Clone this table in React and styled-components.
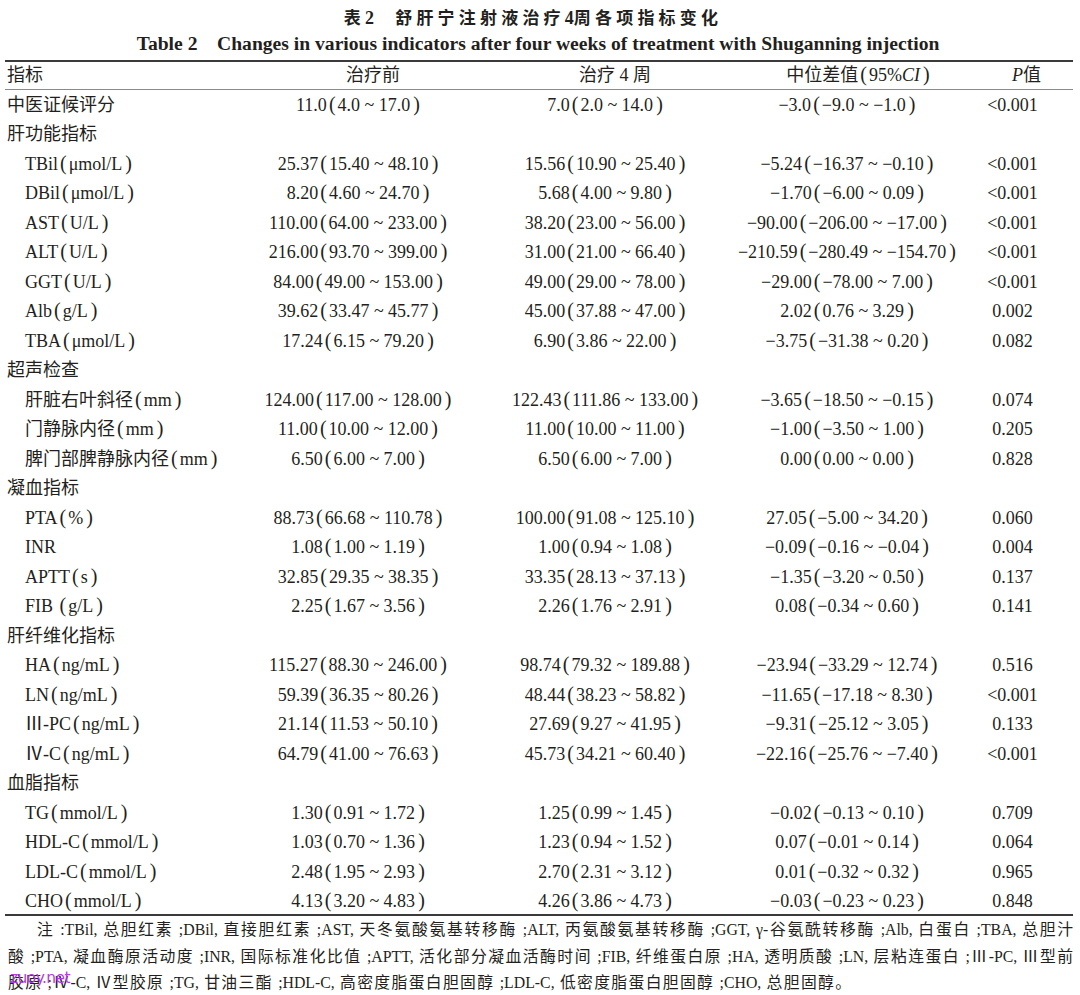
import React from "react";
import styled, { createGlobalStyle } from "styled-components";

const Global = createGlobalStyle`
  html, body { margin: 0; padding: 0; background: #ffffff; }
  body {
    font-family: "Liberation Serif", "Noto Sans CJK SC", serif;
    color: #231f20;
  }
`;

const Page = styled.div`
  position: relative;
  width: 1080px;
  padding: 5px 7px 0 5px;
  box-sizing: border-box;
`;

const Caption = styled.div`
  display: flex;
  flex-direction: column;
  align-items: center;
`;

const TitleCn = styled.div`
  font-family: "Noto Sans CJK SC", sans-serif;
  font-weight: 700;
  font-size: 17px;
  letter-spacing: 4.2px;
  line-height: 24px;
  margin-right: 12px;
`;

const Num = styled.span`
  font-family: "Liberation Serif", serif;
  font-weight: 700;
  font-size: 18px;
  letter-spacing: 0;
`;

const TitleEn = styled.div`
  font-family: "Liberation Serif", serif;
  font-weight: 700;
  font-size: 19.6px;
  line-height: 27px;
  white-space: pre;
  margin-right: 2px;
`;

const Table = styled.table`
  width: 1068px;
  border-collapse: collapse;
  margin-top: 3px;
  border-top: 2px solid #3a3a3a;
  border-bottom: 2px solid #3a3a3a;
  table-layout: fixed;
  font-size: 18px;
`;

const HeadRow = styled.tr`
  height: 28px;
  border-bottom: 1px solid #8a8a8a;
`;

const Row = styled.tr`
  height: 29.5px;
`;

const Cell = styled.td`
  padding: 0;
  white-space: nowrap;
  text-align: ${(p) => (p.$left ? "left" : "center")};
  padding-left: ${(p) => (p.$indent ? "20px" : p.$left ? "2px" : "0")};
  padding-right: ${(p) => (p.$shift ? p.$shift * 2 : 0)}px;
  padding-top: ${(p) => (p.$head ? 0 : 2)}px;
  vertical-align: middle;
  line-height: 22px;
`;

const HeadCell = styled(Cell).attrs({ as: "th" })`
  font-weight: 400;
`;

const It = styled.i`
  font-style: italic;
`;

const Paren = styled.span`
  font-size: 20px;
  line-height: 0;
  margin: ${(p) => (p.$open ? "0 2px 0 2px" : "0 0 0 3px")};
`;

const Note = styled.div`
  font-size: 15.8px;
  line-height: 26.5px;
  padding: 1px 0 0 3px;
  width: 1065px;
`;

const NoteLine = styled.div`
  width: ${(p) => p.$width}px;
  text-align: justify;
  text-align-last: justify;
  text-indent: ${(p) => (p.$first ? "29px" : "0")};
`;

const Watermark = styled.div`
  position: absolute;
  left: 10px;
  top: 969px;
  font-family: "DejaVu Sans", sans-serif;
  font-size: 15.5px;
  letter-spacing: -0.6px;
  color: #b23ee0;
`;

const rows = [
  ["中医证候评分", "11.0(4.0 ~ 17.0)", "7.0(2.0 ~ 14.0)", "−3.0(−9.0 ~ −1.0)", "<0.001"],
  ["肝功能指标"],
  ["TBil(μmol/L)", "25.37(15.40 ~ 48.10)", "15.56(10.90 ~ 25.40)", "−5.24(−16.37 ~ −0.10)", "<0.001", 1],
  ["DBil(μmol/L)", "8.20(4.60 ~ 24.70)", "5.68(4.00 ~ 9.80)", "−1.70(−6.00 ~ 0.09)", "<0.001", 1],
  ["AST(U/L)", "110.00(64.00 ~ 233.00)", "38.20(23.00 ~ 56.00)", "−90.00(−206.00 ~ −17.00)", "<0.001", 1],
  ["ALT(U/L)", "216.00(93.70 ~ 399.00)", "31.00(21.00 ~ 66.40)", "−210.59(−280.49 ~ −154.70)", "<0.001", 1],
  ["GGT(U/L)", "84.00(49.00 ~ 153.00)", "49.00(29.00 ~ 78.00)", "−29.00(−78.00 ~ 7.00)", "<0.001", 1],
  ["Alb(g/L)", "39.62(33.47 ~ 45.77)", "45.00(37.88 ~ 47.00)", "2.02(0.76 ~ 3.29)", "0.002", 1],
  ["TBA(μmol/L)", "17.24(6.15 ~ 79.20)", "6.90(3.86 ~ 22.00)", "−3.75(−31.38 ~ 0.20)", "0.082", 1],
  ["超声检查"],
  ["肝脏右叶斜径(mm)", "124.00(117.00 ~ 128.00)", "122.43(111.86 ~ 133.00)", "−3.65(−18.50 ~ −0.15)", "0.074", 1],
  ["门静脉内径(mm)", "11.00(10.00 ~ 12.00)", "11.00(10.00 ~ 11.00)", "−1.00(−3.50 ~ 1.00)", "0.205", 1],
  ["脾门部脾静脉内径(mm)", "6.50(6.00 ~ 7.00)", "6.50(6.00 ~ 7.00)", "0.00(0.00 ~ 0.00)", "0.828", 1],
  ["凝血指标"],
  ["PTA(%)", "88.73(66.68 ~ 110.78)", "100.00(91.08 ~ 125.10)", "27.05(−5.00 ~ 34.20)", "0.060", 1],
  ["INR", "1.08(1.00 ~ 1.19)", "1.00(0.94 ~ 1.08)", "−0.09(−0.16 ~ −0.04)", "0.004", 1],
  ["APTT(s)", "32.85(29.35 ~ 38.35)", "33.35(28.13 ~ 37.13)", "−1.35(−3.20 ~ 0.50)", "0.137", 1],
  ["FIB (g/L)", "2.25(1.67 ~ 3.56)", "2.26(1.76 ~ 2.91)", "0.08(−0.34 ~ 0.60)", "0.141", 1],
  ["肝纤维化指标"],
  ["HA(ng/mL)", "115.27(88.30 ~ 246.00)", "98.74(79.32 ~ 189.88)", "−23.94(−33.29 ~ 12.74)", "0.516", 1],
  ["LN(ng/mL)", "59.39(36.35 ~ 80.26)", "48.44(38.23 ~ 58.82)", "−11.65(−17.18 ~ 8.30)", "<0.001", 1],
  ["Ⅲ-PC(ng/mL)", "21.14(11.53 ~ 50.10)", "27.69(9.27 ~ 41.95)", "−9.31(−25.12 ~ 3.05)", "0.133", 1],
  ["Ⅳ-C(ng/mL)", "64.79(41.00 ~ 76.63)", "45.73(34.21 ~ 60.40)", "−22.16(−25.76 ~ −7.40)", "<0.001", 1],
  ["血脂指标"],
  ["TG(mmol/L)", "1.30(0.91 ~ 1.72)", "1.25(0.99 ~ 1.45)", "−0.02(−0.13 ~ 0.10)", "0.709", 1],
  ["HDL-C(mmol/L)", "1.03(0.70 ~ 1.36)", "1.23(0.94 ~ 1.52)", "0.07(−0.01 ~ 0.14)", "0.064", 1],
  ["LDL-C(mmol/L)", "2.48(1.95 ~ 2.93)", "2.70(2.31 ~ 3.12)", "0.01(−0.32 ~ 0.32)", "0.965", 1],
  ["CHO(mmol/L)", "4.13(3.20 ~ 4.83)", "4.26(3.86 ~ 4.73)", "−0.03(−0.23 ~ 0.23)", "0.848", 1],
];

const shifts = [0, 15, 10, 11, 14];

const notes = [
  { w: 1065, t: "注 :TBil, 总胆红素 ;DBil, 直接胆红素 ;AST, 天冬氨酸氨基转移酶 ;ALT, 丙氨酸氨基转移酶 ;GGT, γ-谷氨酰转移酶 ;Alb, 白蛋白 ;TBA, 总胆汁" },
  { w: 1065, t: "酸 ;PTA, 凝血酶原活动度 ;INR, 国际标准化比值 ;APTT, 活化部分凝血活酶时间 ;FIB, 纤维蛋白原 ;HA, 透明质酸 ;LN, 层粘连蛋白 ;Ⅲ-PC, Ⅲ型前" },
  { w: 843, t: "胶原 ;Ⅳ-C, Ⅳ型胶原 ;TG, 甘油三酯 ;HDL-C, 高密度脂蛋白胆固醇 ;LDL-C, 低密度脂蛋白胆固醇 ;CHO, 总胆固醇。" },
];

const withParens = (s) =>
  s.split(/([()])/).map((part, i) =>
    part === "(" ? (
      <Paren key={i} $open>
        (
      </Paren>
    ) : part === ")" ? (
      <Paren key={i}>)</Paren>
    ) : (
      part
    )
  );

export default function App() {
  return (
    <>
      <Global />
      <Page>
        <Caption>
          <TitleCn>
            表<Num>2</Num>　舒肝宁注射液治疗<Num>4</Num>周各项指标变化
          </TitleCn>
          <TitleEn>{"Table 2    Changes in various indicators after four weeks of treatment with Shuganning injection"}</TitleEn>
        </Caption>
        <Table>
          <colgroup>
            <col style={{ width: 247 }} />
            <col style={{ width: 242 }} />
            <col style={{ width: 242 }} />
            <col style={{ width: 244 }} />
            <col style={{ width: 93 }} />
          </colgroup>
          <thead>
            <HeadRow>
              <HeadCell $left $head>指标</HeadCell>
              <HeadCell $head>治疗前</HeadCell>
              <HeadCell $head>治疗 4 周</HeadCell>
              <HeadCell $head>
                中位差值<Paren $open>(</Paren>95%<It>CI</It>
                <Paren>)</Paren>
              </HeadCell>
              <HeadCell $head>
                <It>P</It>值
              </HeadCell>
            </HeadRow>
          </thead>
          <tbody>
            {rows.map((r, i) => (
              <Row key={i}>
                <Cell $left $indent={r[5]}>
                  {withParens(r[0])}
                </Cell>
                {[1, 2, 3, 4].map((c) => (
                  <Cell key={c} $shift={shifts[c]}>
                    {r[c] ? withParens(r[c]) : ""}
                  </Cell>
                ))}
              </Row>
            ))}
          </tbody>
        </Table>
        <Note>
          {notes.map((n, i) => (
            <NoteLine key={i} $first={i === 0} $width={n.w}>
              {n.t}
            </NoteLine>
          ))}
        </Note>
        <Watermark>zuoy.net</Watermark>
      </Page>
    </>
  );
}
